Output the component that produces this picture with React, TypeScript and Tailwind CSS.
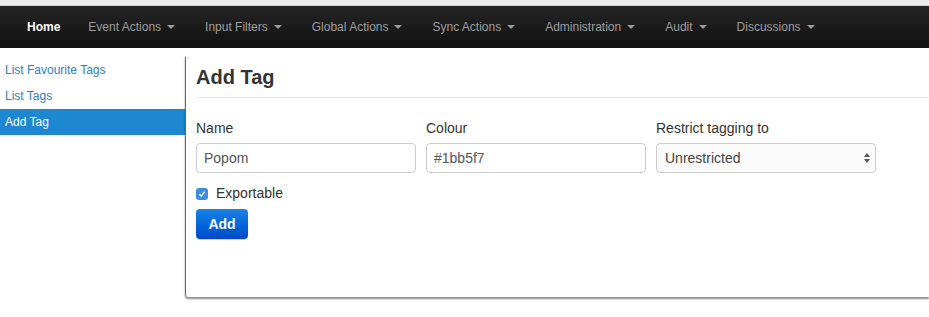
import { useState } from 'react';

const navItems = [
  'Event Actions',
  'Input Filters',
  'Global Actions',
  'Sync Actions',
  'Administration',
  'Audit',
  'Discussions',
];

const sideLinks = ['List Favourite Tags', 'List Tags', 'Add Tag'];

function Caret() {
  return (
    <span className="ml-[6px] inline-block h-0 w-0 border-x-[4px] border-t-[4px] border-x-transparent border-t-[#9a9a9a] align-middle" />
  );
}

export default function App() {
  const [name, setName] = useState('Popom');
  const [colour, setColour] = useState('#1bb5f7');
  const [exportable, setExportable] = useState(true);

  return (
    <div className="min-h-screen w-[929px] overflow-hidden bg-white font-['Liberation_Sans',Arial,sans-serif] text-[#333]">
      {/* browser chrome strip */}
      <div className="h-[6px] border-b border-[#d4d4d4] bg-[#ededed]" />

      {/* Top navbar */}
      <nav className="flex h-[42px] items-center bg-gradient-to-b from-[#242424] to-[#111] pl-3 text-[12px]">
        <a className="pl-[15px] pr-[13px] font-bold text-white">Home</a>
        {navItems.map((item) => (
          <a key={item} className="flex items-center px-[15px] text-[#9d9d9d]">
            {item}
            <Caret />
          </a>
        ))}
      </nav>

      <div className="flex">
        {/* Sidebar */}
        <aside className="w-[185px] shrink-0 pt-[9px] text-[12px]">
          {sideLinks.map((link) => (
            <a
              key={link}
              className={
                link === 'Add Tag'
                  ? 'flex h-[26px] items-center bg-[#1d87d1] px-[5px] text-white'
                  : 'flex h-[26px] items-center px-[5px] text-[#2f7dc3]'
              }
            >
              {link}
            </a>
          ))}
        </aside>

        {/* Main panel */}
        <main className="mt-[9px] h-[240px] flex-1 rounded-bl-[3px] border-l border-[#666] pl-[10px] shadow-[0_2px_2px_rgba(0,0,0,0.45)]">
          <h2 className="flex h-[40px] items-center text-[20px] font-bold text-[#333]">Add Tag</h2>
          <div className="border-b border-[#e5e5e5]" />

          <div className="mt-[22px] flex gap-[10px]">
            <div className="flex w-[220px] flex-col gap-[6px]">
              <label className="text-[14px] leading-[17px]">Name</label>
              <input
                value={name}
                onChange={(e) => setName(e.target.value)}
                className="h-[30px] rounded-[4px] border border-[#ccc] px-[7px] text-[14px] text-[#555] outline-none"
              />
            </div>
            <div className="flex w-[220px] flex-col gap-[6px]">
              <label className="text-[14px] leading-[17px]">Colour</label>
              <input
                value={colour}
                onChange={(e) => setColour(e.target.value)}
                className="h-[30px] rounded-[4px] border border-[#ccc] px-[7px] text-[14px] text-[#555] outline-none"
              />
            </div>
            <div className="flex w-[220px] flex-col gap-[6px]">
              <label className="text-[14px] leading-[17px]">Restrict tagging to</label>
              <div className="flex h-[30px] items-center justify-between rounded-[4px] border border-[#ccc] bg-[#fafafa] pl-[8px] pr-[4px] text-[14px] text-[#444]">
                <span>Unrestricted</span>
                <svg width="8" height="12" viewBox="0 0 8 12">
                  <path d="M4 1 L7 5 H1 Z" fill="#555" />
                  <path d="M4 11 L7 7 H1 Z" fill="#555" />
                </svg>
              </div>
            </div>
          </div>

          <label className="mt-[12px] flex items-center gap-[8px] text-[14px] leading-[17px]">
            <button
              onClick={() => setExportable(!exportable)}
              className="flex h-[12px] w-[12px] items-center justify-center rounded-[3px] bg-[#3b8ee8]"
            >
              {exportable && (
                <svg width="8" height="8" viewBox="0 0 8 8">
                  <path d="M1.3 4.2 L3.2 6 L6.7 1.8" stroke="white" strokeWidth="1.5" fill="none" />
                </svg>
              )}
            </button>
            Exportable
          </label>

          <button className="mt-[7px] h-[30px] w-[52px] rounded-[4px] bg-gradient-to-b from-[#1a82e6] to-[#0048cc] text-[14px] font-bold text-white shadow-[0_1px_1px_rgba(0,0,0,0.2)]">
            Add
          </button>
        </main>
      </div>
    </div>
  );
}
